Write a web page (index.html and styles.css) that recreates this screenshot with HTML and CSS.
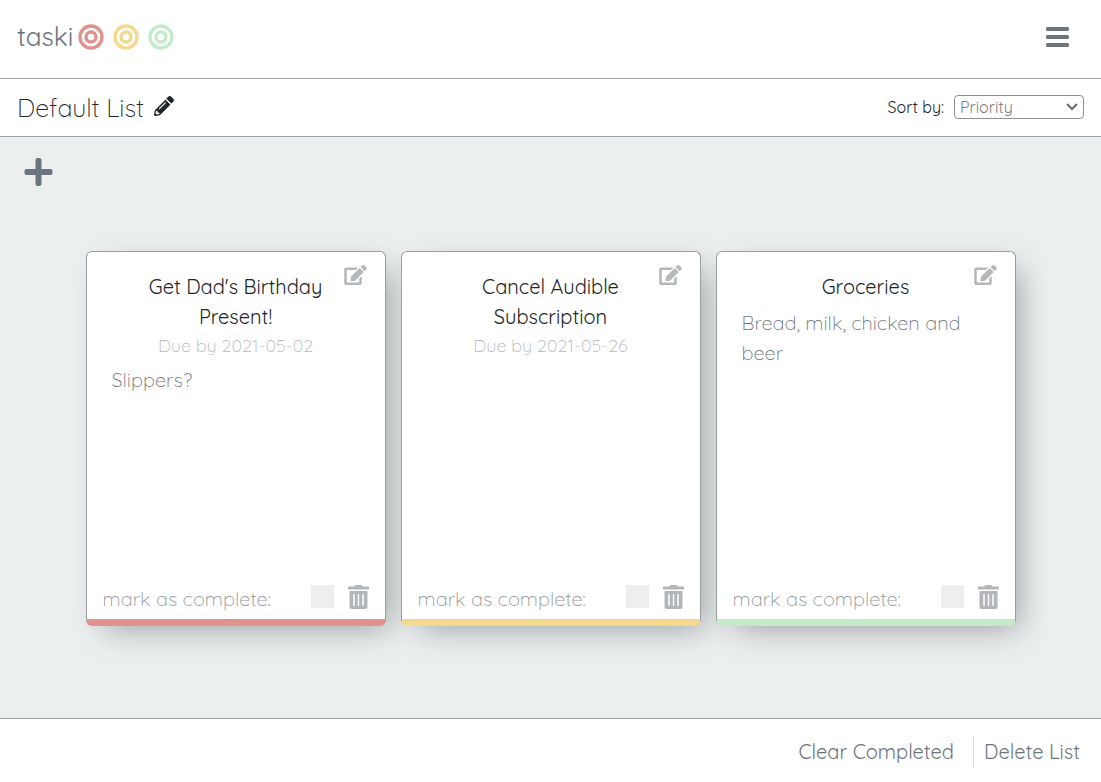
FILE: index.html
```html
<!DOCTYPE html>
<html lang="en">
<head>
<meta charset="utf-8">
<meta name="viewport" content="width=device-width, initial-scale=1">
<title>taski</title>
<link rel="stylesheet" href="styles.css">
</head>
<body>
<svg class="sprite" aria-hidden="true">
  <symbol id="edit" viewBox="0 0 576 512"><path d="M402.6 83.2l90.2 90.2c3.8 3.8 3.8 10 0 13.8L274.4 405.6l-92.8 10.3c-12.4 1.4-22.9-9.1-21.5-21.5l10.3-92.8L388.8 83.2c3.8-3.8 10-3.8 13.8 0zm162-22.9l-48.8-48.8c-15.2-15.2-39.9-15.2-55.2 0l-35.4 35.4c-3.8 3.8-3.8 10 0 13.8l90.2 90.2c3.8 3.8 10 3.8 13.8 0l35.4-35.4c15.2-15.3 15.2-40 0-55.2zM384 346.2V448H64V128h229.8c3.2 0 6.2-1.3 8.5-3.5l40-40c7.6-7.6 2.2-20.5-8.5-20.5H48C21.5 64 0 85.5 0 112v352c0 26.5 21.5 48 48 48h352c26.5 0 48-21.5 48-48V306.2c0-10.7-12.9-16-20.5-8.5l-40 40c-2.2 2.3-3.5 5.3-3.5 8.5z"/></symbol>
  <symbol id="trash" viewBox="0 0 448 512"><path d="M32 464a48 48 0 0 0 48 48h288a48 48 0 0 0 48-48V128H32zm272-256a16 16 0 0 1 32 0v224a16 16 0 0 1-32 0zm-96 0a16 16 0 0 1 32 0v224a16 16 0 0 1-32 0zm-96 0a16 16 0 0 1 32 0v224a16 16 0 0 1-32 0zM432 32H312l-9.4-18.7A24 24 0 0 0 281.1 0H166.8a23.72 23.72 0 0 0-21.4 13.3L136 32H16A16 16 0 0 0 0 48v32a16 16 0 0 0 16 16h416a16 16 0 0 0 16-16V48a16 16 0 0 0-16-16z"/></symbol>
  <symbol id="ring" viewBox="0 0 26 26"><g fill="none" stroke="currentColor"><circle cx="13" cy="13" r="11" stroke-width="3.4"/><circle cx="13" cy="13" r="5" stroke-width="3.4"/></g></symbol>
</svg>

<header class="topbar">
  <h1 class="brand">taski
    <span class="rings">
      <svg class="ring high"><use href="#ring"/></svg>
      <svg class="ring medium"><use href="#ring"/></svg>
      <svg class="ring low"><use href="#ring"/></svg>
    </span>
  </h1>
  <button class="icon-button menu" type="button" aria-label="Menu">
    <svg viewBox="0 0 448 512"><rect y="60" width="448" height="76" rx="16"/><rect y="218" width="448" height="76" rx="16"/><rect y="376" width="448" height="76" rx="16"/></svg>
  </button>
</header>

<section class="listbar">
  <div class="list-name">
    <h2>Default List</h2>
    <button class="icon-button rename" type="button" aria-label="Rename list">
      <svg viewBox="0 0 512 512"><path d="M497.9 142.1l-46.1 46.1c-4.7 4.7-12.3 4.7-17 0l-111-111c-4.7-4.7-4.7-12.3 0-17l46.1-46.1c18.7-18.7 49.1-18.7 67.9 0l60.1 60.1c18.8 18.7 18.8 49.1 0 67.9zM284.2 99.8L21.6 362.4.4 483.9c-2.9 16.4 11.4 30.6 27.8 27.8l121.5-21.3 262.6-262.6c4.7-4.7 4.7-12.3 0-17l-111-111c-4.8-4.7-12.4-4.7-17.1 0zM124.1 339.9c-5.5-5.5-5.5-14.3 0-19.8l154-154c5.5-5.5 14.3-5.5 19.8 0s5.5 14.3 0 19.8l-154 154c-5.5 5.5-14.3 5.5-19.8 0zM88 424h48v36.3l-64.5 11.3-31.1-31.1L51.7 376H88v48z"/></svg>
    </button>
  </div>
  <div class="sort">
    <label for="sort">Sort by:</label>
    <span class="select-wrap">
      <select id="sort"><option>Priority</option><option>Due date</option></select>
      <svg class="chevron" viewBox="0 0 12 8" aria-hidden="true"><path d="M1 1l5 5 5-5"/></svg>
    </span>
  </div>
</section>

<main class="board">
  <button class="icon-button add" type="button" aria-label="Add task">
    <svg viewBox="0 32 448 448"><path d="M416 208H272V64c0-17.67-14.33-32-32-32h-32c-17.67 0-32 14.33-32 32v144H32c-17.67 0-32 14.33-32 32v32c0 17.67 14.33 32 32 32h144v144c0 17.67 14.33 32 32 32h32c17.67 0 32-14.33 32-32V304h144c17.67 0 32-14.33 32-32v-32c0-17.67-14.33-32-32-32z"/></svg>
  </button>

  <div class="cards">
    <article class="card high">
      <button class="icon-button edit" type="button" aria-label="Edit task"><svg><use href="#edit"/></svg></button>
      <h3>Get Dad's Birthday Present!</h3>
      <p class="due">Due by 2021-05-02</p>
      <p class="notes">Slippers?</p>
      <div class="card-foot">
        <label for="done-1">mark as complete:</label>
        <input id="done-1" type="checkbox">
        <button class="icon-button trash" type="button" aria-label="Delete task"><svg><use href="#trash"/></svg></button>
      </div>
    </article>
    <article class="card medium">
      <button class="icon-button edit" type="button" aria-label="Edit task"><svg><use href="#edit"/></svg></button>
      <h3>Cancel Audible Subscription</h3>
      <p class="due">Due by 2021-05-26</p>
      <div class="card-foot">
        <label for="done-2">mark as complete:</label>
        <input id="done-2" type="checkbox">
        <button class="icon-button trash" type="button" aria-label="Delete task"><svg><use href="#trash"/></svg></button>
      </div>
    </article>
    <article class="card low">
      <button class="icon-button edit" type="button" aria-label="Edit task"><svg><use href="#edit"/></svg></button>
      <h3>Groceries</h3>
      <p class="notes">Bread, milk, chicken and beer</p>
      <div class="card-foot">
        <label for="done-3">mark as complete:</label>
        <input id="done-3" type="checkbox">
        <button class="icon-button trash" type="button" aria-label="Delete task"><svg><use href="#trash"/></svg></button>
      </div>
    </article>
  </div>
</main>

<footer class="actions">
  <button type="button">Clear Completed</button>
  <button type="button">Delete List</button>
</footer>
</body>
</html>
```
FILE: styles.css
```css
* { box-sizing: border-box; }

body {
  margin: 0;
  min-height: 100vh;
  display: flex;
  flex-direction: column;
  background: #fff;
  color: #212529;
  font-family: Quicksand, Lato, "Open Sans", sans-serif;
  font-size: 20px;
  line-height: 30px;
}

h1, h2, h3, p { margin: 0; }

button, select { font: inherit; }

.sprite { display: none; }

.icon-button {
  display: flex;
  padding: 0;
  border: 0;
  background: none;
  color: #6c757d;
  cursor: pointer;
}
.icon-button svg { width: 100%; height: 100%; fill: currentColor; }

.high { --priority: #df928e; }
.medium { --priority: #f3d88e; }
.low { --priority: #c3ebca; }

.topbar, .listbar {
  display: flex;
  align-items: center;
  justify-content: space-between;
  border-bottom: 1px solid #a0a3a5;
}

.topbar { min-height: 79px; padding: 0 32px 4px 17px; }

.brand {
  display: flex;
  align-items: center;
  gap: 5px;
  color: #6c757d;
  font-size: 26px;
  font-weight: 400;
}
.rings { display: flex; gap: 9px; }
.ring { width: 26px; height: 26px; color: var(--priority); }

.menu { width: 23px; height: 26px; }

.listbar { min-height: 58px; padding: 0 17px; }
.list-name { display: flex; align-items: center; gap: 10px; }
.list-name h2 { font-size: 25px; font-weight: 300; }
.rename { width: 20px; height: 20px; margin-bottom: 3px; color: #212529; }

.sort { display: flex; align-items: center; gap: 10px; padding-bottom: 1px; font-size: 16px; }
.select-wrap { display: grid; align-items: center; }
.select-wrap > * { grid-area: 1 / 1; }
.sort select {
  width: 130px;
  height: 24px;
  padding: 0 5px;
  border: 1px solid #8f8f8f;
  border-radius: 4px;
  background: #fff;
  color: #808080;
  line-height: 22px;
  appearance: none;
}
.chevron {
  width: 12px;
  height: 8px;
  margin-right: 6px;
  justify-self: end;
  pointer-events: none;
  fill: none;
  stroke: #6a6a6a;
  stroke-width: 2;
}

.board { flex: 1; padding: 21px 24px 91px; background: #ebeff0; }
.add { width: 29px; height: 28px; }

.cards {
  display: flex;
  flex-wrap: wrap;
  justify-content: center;
  gap: 15px;
  margin-top: 65px;
}

.card {
  position: relative;
  display: flex;
  flex-direction: column;
  width: 300px;
  min-height: 375px;
  padding: 20px 16px 5px;
  border: 1px solid #9c9fa1;
  border-bottom: 7px solid var(--priority);
  border-radius: 6px;
  background: #fff;
  box-shadow: 10px 10px 30px -8px rgba(0, 0, 0, .35);
}
.card h3 { padding: 0 40px; font-size: 20px; font-weight: 400; text-align: center; }
.edit { position: absolute; top: 13px; right: 18px; width: 23px; height: 20px; color: #b5b8bb; }
.due { color: #b5b8bb; font-size: 18px; font-weight: 300; line-height: 27px; text-align: center; }
.notes { padding: 6px 9px; color: #6c757d; font-weight: 300; }

.card-foot { display: flex; align-items: center; gap: 14px; margin-top: auto; }
.card-foot label { flex: 1; color: #909599; font-weight: 300; }
.card-foot input {
  width: 23px;
  height: 23px;
  margin: 0 0 6px;
  appearance: none;
  background: #eee;
}
.card-foot input:checked { background: var(--priority); }
.trash { width: 21px; height: 24px; margin-bottom: 5px; color: #b2b6bb; }

.actions {
  display: flex;
  justify-content: flex-end;
  min-height: 64px;
  padding: 17px 11px 14px;
  border-top: 1px solid #a0a3a5;
}
.actions button {
  padding: 0 10px;
  border: 0;
  background: none;
  color: #6c757d;
}
.actions button + button { margin-left: 9px; border-left: 1px solid #dcdfe2; }
```
